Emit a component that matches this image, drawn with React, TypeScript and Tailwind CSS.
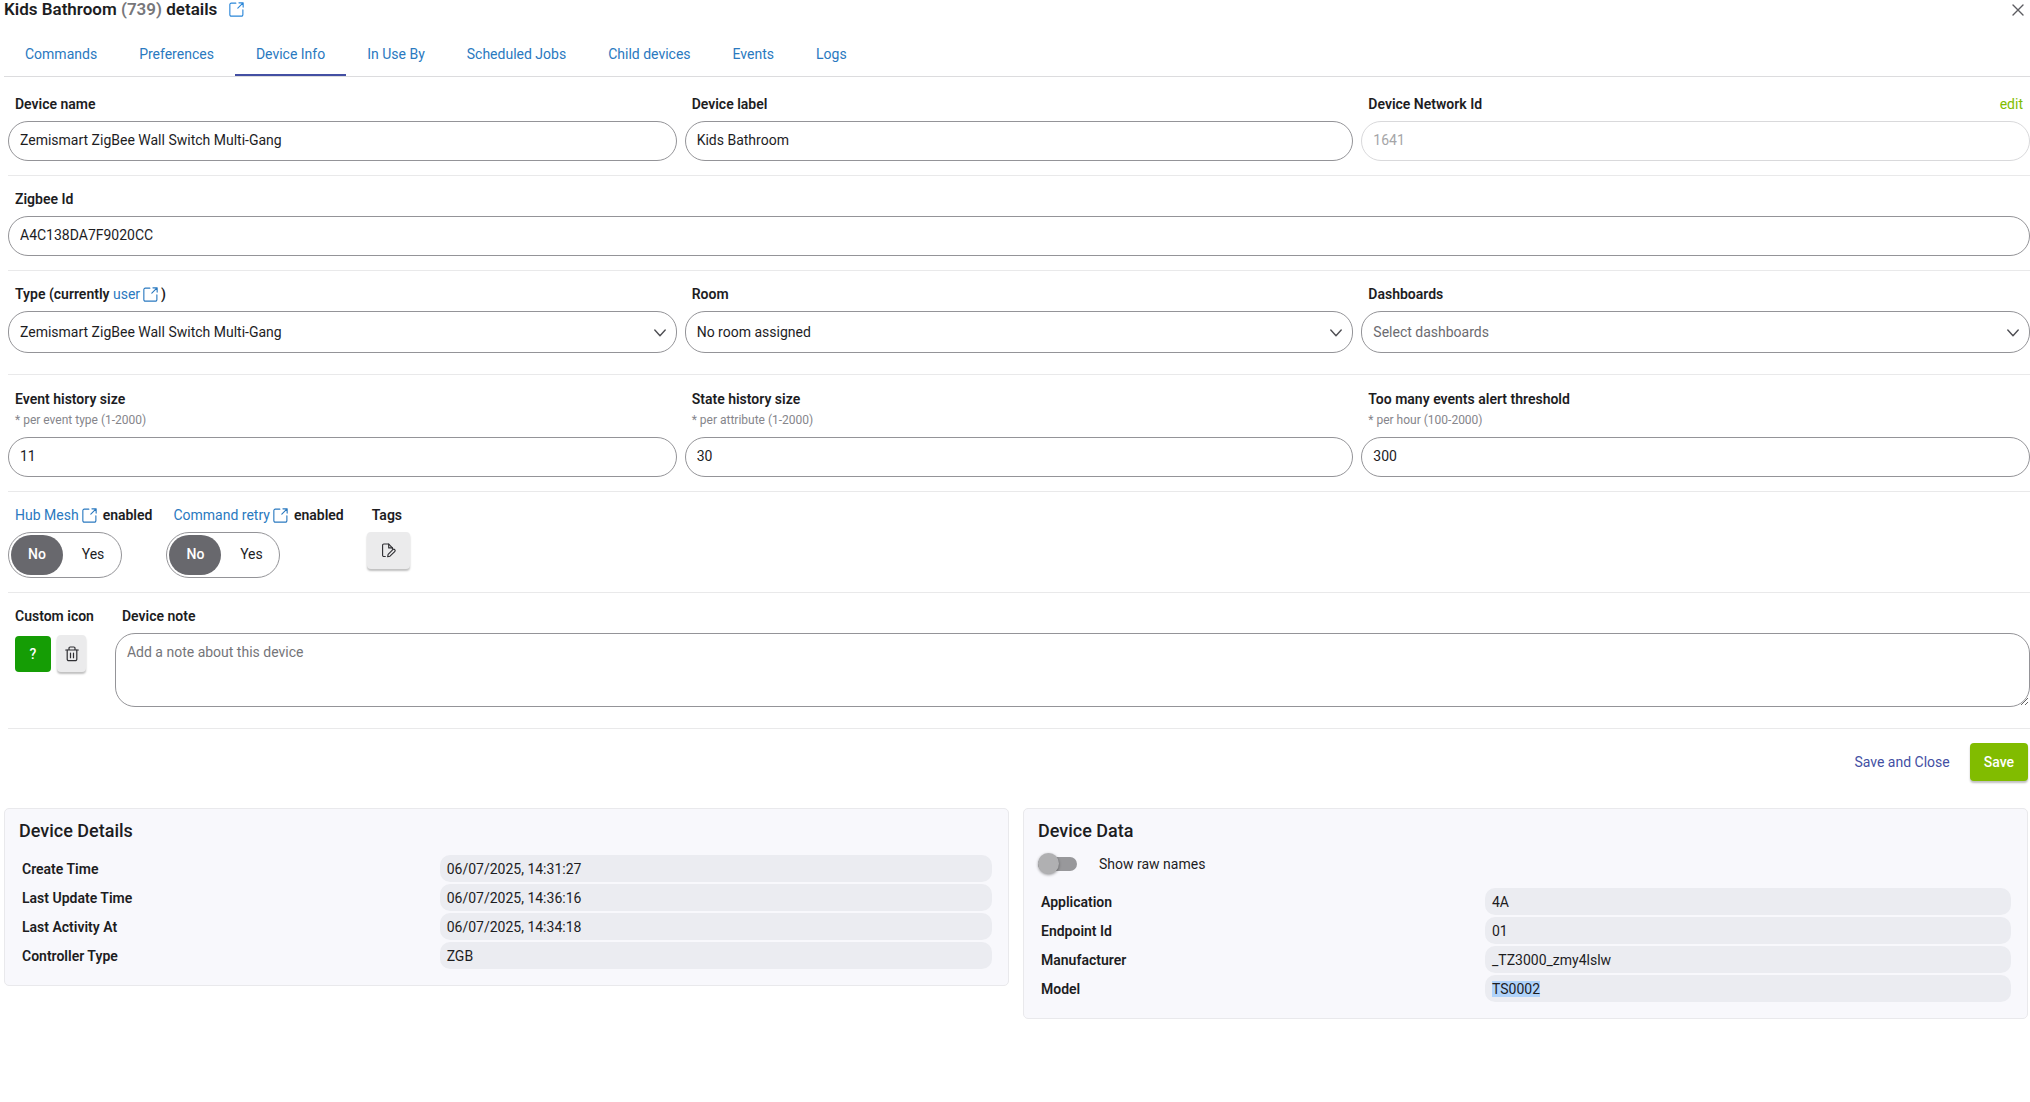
import type { ReactNode } from 'react';

const TABS = ['Commands', 'Preferences', 'Device Info', 'In Use By', 'Scheduled Jobs', 'Child devices', 'Events', 'Logs'];

const DETAILS = [
  ['Create Time', '06/07/2025, 14:31:27'],
  ['Last Update Time', '06/07/2025, 14:36:16'],
  ['Last Activity At', '06/07/2025, 14:34:18'],
  ['Controller Type', 'ZGB'],
];

const DATA = [
  ['Application', '4A'],
  ['Endpoint Id', '01'],
  ['Manufacturer', '_TZ3000_zmy4lslw'],
  ['Model', 'TS0002'],
];

function ExternalIcon() {
  return (
    <svg viewBox="0 0 16 16" className="h-[15px] w-[15px] shrink-0" fill="none" stroke="currentColor" strokeWidth="1.2" strokeLinecap="round" strokeLinejoin="round">
      <path d="M7.3 1.2H2.4A1.5 1.5 0 0 0 .9 2.7v10.9a1.5 1.5 0 0 0 1.5 1.5h10.9a1.5 1.5 0 0 0 1.5-1.5V8.4" />
      <path d="M10.6.9h4.5v4.5M15 1 9.4 6.6" />
    </svg>
  );
}

function Section({ children, className = 'pb-[14px]' }: { children: ReactNode; className?: string }) {
  return <section className={`ml-2 border-b border-[#e9e9ea] pt-[13px] ${className}`}>{children}</section>;
}

interface FieldProps {
  id: string;
  label: ReactNode;
  hint?: string;
  action?: ReactNode;
  children: ReactNode;
}

function Field({ id, label, hint, action, children }: FieldProps) {
  return (
    <div className="flex min-w-0 flex-col">
      <div className="flex justify-between px-[7px]">
        <label htmlFor={id} className="font-semibold">
          {label}
        </label>
        {action}
      </div>
      {hint && <div className="px-[7px] pt-px text-[12px] text-[#85858b]">{hint}</div>}
      <div className="mt-[7px]">{children}</div>
    </div>
  );
}

function TextInput({ id, value, disabled }: { id: string; value: string; disabled?: boolean }) {
  return (
    <input
      id={id}
      type="text"
      defaultValue={value}
      disabled={disabled}
      className="block h-10 w-full rounded-[20px] border border-[#949498] bg-white px-[11px] pb-[2px] disabled:border-[#d9d9db] disabled:text-[#a5a5a7]"
    />
  );
}

function SelectInput({ id, value, muted }: { id: string; value: string; muted?: boolean }) {
  return (
    <div className="relative">
      <select
        id={id}
        className={`block h-[42px] w-full appearance-none rounded-[20px] border border-[#949498] bg-white px-[11px] ${muted ? 'text-[#6b6b70]' : ''}`}
      >
        <option>{value}</option>
      </select>
      <svg viewBox="0 0 12 8" className="pointer-events-none absolute right-[11px] top-[18px] h-2 w-3" fill="none" stroke="#4f4f54" strokeWidth="1.4" strokeLinecap="round" strokeLinejoin="round">
        <path d="m.8 1 5.2 5.8L11.2 1" />
      </svg>
    </div>
  );
}

function YesNo({ name, link }: { name: string; link: string }) {
  return (
    <fieldset>
      <legend className="flex px-[7px] font-semibold">
        <a href="#" className="flex items-center gap-[3px] font-normal text-[#2a79c0]">
          {link}
          <ExternalIcon />
        </a>
        <span className="ml-[6px]">enabled</span>
      </legend>
      <div className="mt-[7px] flex h-[46px] w-[114px] gap-1 rounded-full border border-[#949498] p-[2px]">
        {['No', 'Yes'].map((option) => (
          <label
            key={option}
            className="flex flex-1 items-center justify-center rounded-full pb-[2px] has-checked:bg-[#68686d] has-checked:font-medium has-checked:text-white"
          >
            <input type="radio" name={name} defaultChecked={option === 'No'} className="sr-only" />
            {option}
          </label>
        ))}
      </div>
    </fieldset>
  );
}

interface PanelProps {
  title: string;
  rows: string[][];
  labelWidth: string;
  selected?: string;
  children?: ReactNode;
}

function Panel({ title, rows, labelWidth, selected, children }: PanelProps) {
  return (
    <section className="rounded-[5px] border border-[#e9e9ec] bg-[#f8f8fc] px-[14px] pb-[14px] pt-[10px]">
      <h2 className="text-[18px] font-medium leading-6">{title}</h2>
      {children}
      <table className="mt-[10px] w-full table-fixed border-separate border-spacing-[2px]">
        <tbody>
          {rows.map(([key, value]) => (
            <tr key={key} className="h-[27px]">
              <th scope="row" className={`pl-px text-left font-semibold ${labelWidth}`}>
                {key}
              </th>
              <td className="rounded-[10px] bg-[#ebecf1] px-[7px]">
                {value === selected ? <mark className="bg-[#b0d3fa] text-inherit">{value}</mark> : value}
              </td>
            </tr>
          ))}
        </tbody>
      </table>
    </section>
  );
}

export default function App() {
  return (
    <main className="bg-white font-[Roboto,sans-serif] text-[14px] leading-5 text-[#1d1d1f]">
      <header className="flex justify-between pl-1 pr-[6px]">
        <h1 className="flex items-center text-[17px] font-semibold leading-[18px]">
          Kids Bathroom&nbsp;<span className="text-[#77777b]">(739)</span>&nbsp;details
          <a href="#" aria-label="Open in new tab" className="ml-3 text-[#2a86d8]">
            <ExternalIcon />
          </a>
        </h1>
        <button type="button" aria-label="Close" className="pt-[2px]">
          <svg viewBox="0 0 12 12" className="h-3 w-3" stroke="#5c5c61" strokeWidth="1.4" strokeLinecap="round">
            <path d="m1 1 10 10M11 1 1 11" />
          </svg>
        </button>
      </header>

      <nav className="ml-1 mt-4 flex border-b border-[#dcdcde]">
        {TABS.map((tab) => (
          <a
            key={tab}
            href="#"
            className={`border-b-2 px-[21px] py-[10px] text-[#2a79c0] ${tab === 'Device Info' ? 'border-[#434fa3]' : 'border-transparent'}`}
          >
            {tab}
          </a>
        ))}
      </nav>

      <form className="pt-1">
        <Section>
          <div className="grid grid-cols-3 gap-2">
            <Field id="name" label="Device name">
              <TextInput id="name" value="Zemismart ZigBee Wall Switch Multi-Gang" />
            </Field>
            <Field id="label" label="Device label">
              <TextInput id="label" value="Kids Bathroom" />
            </Field>
            <Field
              id="dni"
              label="Device Network Id"
              action={
                <button type="button" className="text-[#81bc00]">
                  edit
                </button>
              }
            >
              <TextInput id="dni" value="1641" disabled />
            </Field>
          </div>
        </Section>

        <Section>
          <Field id="zigbee" label="Zigbee Id">
            <TextInput id="zigbee" value="A4C138DA7F9020CC" />
          </Field>
        </Section>

        <Section className="pb-[21px]">
          <div className="grid grid-cols-3 gap-2">
            <Field
              id="type"
              label={
                <span className="flex items-center">
                  Type (currently&nbsp;
                  <a href="#" className="mr-[3px] flex items-center gap-[3px] font-normal text-[#2a79c0]">
                    user
                    <ExternalIcon />
                  </a>
                  )
                </span>
              }
            >
              <SelectInput id="type" value="Zemismart ZigBee Wall Switch Multi-Gang" />
            </Field>
            <Field id="room" label="Room">
              <SelectInput id="room" value="No room assigned" />
            </Field>
            <Field id="dashboards" label="Dashboards">
              <SelectInput id="dashboards" value="Select dashboards" muted />
            </Field>
          </div>
        </Section>

        <Section>
          <div className="grid grid-cols-3 gap-2 pt-px">
            <Field id="events" label="Event history size" hint="* per event type (1-2000)">
              <TextInput id="events" value="11" />
            </Field>
            <Field id="states" label="State history size" hint="* per attribute (1-2000)">
              <TextInput id="states" value="30" />
            </Field>
            <Field id="threshold" label="Too many events alert threshold" hint="* per hour (100-2000)">
              <TextInput id="threshold" value="300" />
            </Field>
          </div>
        </Section>

        <Section>
          <div className="flex gap-[7px]">
            <YesNo name="mesh" link="Hub Mesh" />
            <YesNo name="retry" link="Command retry" />
            <div className="ml-[9px]">
              <div id="tags" className="px-[5px] font-semibold">
                Tags
              </div>
              <button
                type="button"
                aria-labelledby="tags"
                className="mt-[7px] flex h-[37px] w-[43px] items-center justify-center rounded-[4px] bg-[#ebebec] shadow-[0_2px_2px_rgba(0,0,0,0.25)]"
              >
                <svg viewBox="0 0 16 16" className="h-[15px] w-[15px]" fill="none" stroke="#2f2f33" strokeWidth="1.2" strokeLinecap="round" strokeLinejoin="round">
                  <path d="M4.6 14.4H3a1.3 1.3 0 0 1-1.3-1.3V2.4A1.3 1.3 0 0 1 3 1.1h5.2l4 4.1v1.3" />
                  <path d="M8.2 1.1v4.1h4" />
                  <path d="m7.6 12.1 5-5a1.3 1.3 0 0 1 2 2l-5 5-2.5.6z" />
                </svg>
              </button>
            </div>
          </div>
        </Section>

        <Section className="pb-[21px]">
          <div className="flex gap-[21px]">
            <div className="pl-[7px]">
              <div className="font-semibold">Custom icon</div>
              <div className="mt-[9px] flex gap-[6px]">
                <button type="button" aria-label="Choose icon" className="mt-px h-9 w-9 rounded-[4px] bg-[#159d05] font-medium text-white">
                  ?
                </button>
                <button
                  type="button"
                  aria-label="Delete icon"
                  className="flex h-[37px] w-[29px] items-center justify-center rounded-[4px] bg-[#ebebec] shadow-[0_2px_2px_rgba(0,0,0,0.25)]"
                >
                  <svg viewBox="0 0 14 16" className="h-4 w-[14px]" fill="none" stroke="#2f2f33" strokeWidth="1.2" strokeLinecap="round" strokeLinejoin="round">
                    <path d="M.7 4h12.6M4 4V2.2A1.2 1.2 0 0 1 5.2 1h3.6A1.2 1.2 0 0 1 10 2.2V4" />
                    <path d="M2.2 4v9.2a1.5 1.5 0 0 0 1.5 1.5h6.6a1.5 1.5 0 0 0 1.5-1.5V4M5.5 7.2v4.5M8.5 7.2v4.5" />
                  </svg>
                </button>
              </div>
            </div>
            <div className="flex-1">
              <label htmlFor="note" className="block px-[7px] font-semibold">
                Device note
              </label>
              <textarea
                id="note"
                placeholder="Add a note about this device"
                className="mt-[7px] block h-[74px] w-full resize rounded-[20px] border border-[#949498] bg-white px-[11px] py-2 placeholder:text-[#757579]"
              />
            </div>
          </div>
        </Section>

        <div className="flex justify-end gap-[6px] pr-[2px] pt-[14px]">
          <button type="button" className="px-[14px] text-[#434fa3]">
            Save and Close
          </button>
          <button type="submit" className="h-[38px] rounded-[4px] bg-[#81bc00] px-[14px] font-medium text-white shadow-[0_2px_2px_rgba(0,0,0,0.25)]">
            Save
          </button>
        </div>
      </form>

      <div className="mt-[27px] grid grid-cols-2 items-start gap-[14px] pl-1 pr-[2px]">
        <Panel title="Device Details" rows={DETAILS} labelWidth="w-[43%]" />
        <Panel title="Device Data" rows={DATA} labelWidth="w-[443px]" selected="TS0002">
          <label className="mt-2 flex h-[25px] items-center gap-[22px]">
            <input type="checkbox" role="switch" className="sr-only" />
            <span className="flex h-[14px] w-[39px] items-center rounded-full bg-[#98989b]">
              <span className="h-[21px] w-[21px] shrink-0 rounded-full bg-[#b0b0b2] shadow-[0_1px_3px_rgba(0,0,0,0.4)]" />
            </span>
            Show raw names
          </label>
        </Panel>
      </div>
    </main>
  );
}
